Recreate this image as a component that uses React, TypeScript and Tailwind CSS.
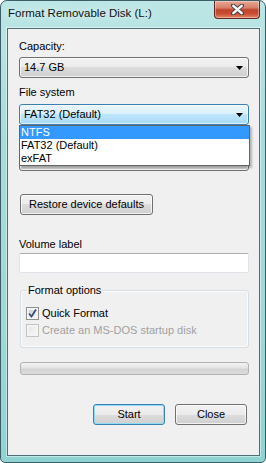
import React from "react"

const grayBtn =
    "bg-[linear-gradient(#f2f2f2,#ebebeb_50%,#dddddd_50%,#cfcfcf)] shadow-[inset_0_0_0_1px_rgba(255,255,255,0.7)]"

function Arrow() {
    return (
        <svg width="7" height="4" viewBox="0 0 7 4" className="absolute right-[5px] top-[8px]">
            <polygon points="0,0 7,0 3.5,4" fill="#000" />
        </svg>
    )
}

function Combo({ text, focused }: { text?: string; focused?: boolean }) {
    return (
        <div
            className={
                "relative h-[21px] w-[230px] rounded-[3px] border pl-[4px] leading-[19px] " +
                (focused
                    ? "border-[#3c7fb1] bg-[linear-gradient(#eaf6fd,#d9f0fc_50%,#bee6fd_50%,#a7d9f5)] shadow-[inset_0_0_0_1px_rgba(255,255,255,0.6)]"
                    : "border-[#707070] " + grayBtn)
            }
        >
            {text}
            <Arrow />
        </div>
    )
}

function Check({ checked, disabled }: { checked?: boolean; disabled?: boolean }) {
    return (
        <div
            className={
                "relative h-[13px] w-[13px] border p-[2px] " +
                (disabled ? "border-[#c4c4c4] bg-[#f4f4f4]" : "border-[#8e8f8f] bg-[#f4f4f4]")
            }
        >
            <div
                className={
                    "h-full w-full " +
                    (disabled
                        ? "bg-[linear-gradient(135deg,#e6e6e6,#f7f7f7)]"
                        : "bg-[linear-gradient(135deg,#c9cdd3,#f6f6f6)]")
                }
            />
            {checked && (
                <svg width="11" height="11" viewBox="0 0 11 11" className="absolute left-[0px] top-[0px]">
                    <path d="M2 5.5 L4.5 8.5 L9 1.5" fill="none" stroke="#3a4d7a" strokeWidth="1.8" />
                </svg>
            )}
        </div>
    )
}

export default function App() {
    return (
        <div className="relative flex h-[463px] w-[266px] flex-col rounded-t-[7px] rounded-b-[5px] border border-[#3d5e67] bg-[linear-gradient(#bde6e6,#a7dcdc_30%,#9fd8d8_70%,#90d3d3)] font-['Liberation_Sans',Arial,sans-serif] text-[11px] text-black">
            {/* title bar */}
            <div className="flex h-[27px] items-center pl-[7px] pb-[2px] text-[11.5px] text-[#111] [text-shadow:0_0_6px_#ffffff]">
                Format Removable Disk (L:)
            </div>
            <div className="absolute left-[213px] top-0 flex h-[18px] w-[46px] items-center justify-center rounded-b-[4px] border border-t-0 border-[#5b2a22] bg-[linear-gradient(#e7a796,#d7806b_40%,#c2432b_52%,#c84e33_75%,#e58666)] shadow-[inset_0_0_0_1px_rgba(255,255,255,0.35)]">
                <svg width="13" height="11" viewBox="0 0 13 11">
                    <path d="M2 1.5 L11 9.5 M11 1.5 L2 9.5" stroke="#444" strokeWidth="4.2" strokeLinecap="round" />
                    <path d="M2.3 1.8 L10.7 9.2 M10.7 1.8 L2.3 9.2" stroke="#fff" strokeWidth="2.4" strokeLinecap="round" />
                </svg>
            </div>

            {/* client area */}
            <div className="ml-[6px] flex h-[428px] w-[253px] flex-col border border-[#4f6d74] bg-[#f0f0f0] pl-[11px] pr-[10px] pt-[10px] shadow-[0_0_0_1px_rgba(255,255,255,0.45)]">
                <div className="h-[15px] leading-[15px]">Capacity:</div>
                <div className="mt-[3px]">
                    <Combo text="14.7 GB" />
                </div>

                <div className="mt-[7px] h-[15px] leading-[15px]">File system</div>
                <div className="relative z-10 mt-[4px]">
                    <Combo text="FAT32 (Default)" focused />
                    <div className="absolute left-0 top-full w-[231px] border border-[#646464] bg-white shadow-[2px_2px_2px_rgba(0,0,0,0.25)]">
                        <div className="h-[13px] bg-[#3399ff] pl-[1px] leading-[13px] text-white">NTFS</div>
                        <div className="h-[13px] pl-[1px] leading-[13px]">FAT32 (Default)</div>
                        <div className="h-[13px] pl-[1px] leading-[13px]">exFAT</div>
                    </div>
                </div>

                {/* allocation unit size row, covered by the open list */}
                <div className="mt-[6px] h-[15px]" />
                <div className="mt-[4px]">
                    <Combo />
                </div>

                <div
                    className={
                        "ml-[1px] mt-[23px] flex h-[21px] w-[133px] items-center justify-center rounded-[3px] border border-[#707070] " +
                        grayBtn
                    }
                >
                    Restore device defaults
                </div>

                <div className="mt-[22px] h-[15px] leading-[15px]">Volume label</div>
                <div className="mt-[1px] h-[20px] w-[230px] rounded-[2px] border border-[#e2e3ea] border-t-[#abadb3] bg-white" />

                {/* format options */}
                <div className="relative ml-[1px] mt-[17px] h-[58px] w-[229px] rounded-[3px] border border-[#d5dfe5] pl-[5px] pt-[14px] shadow-[inset_0_0_0_1px_rgba(255,255,255,0.8)]">
                    <div className="absolute left-[6px] top-[-8px] bg-[#f0f0f0] px-[1px] leading-[15px]">Format options</div>
                    <div className="flex h-[17px] items-center gap-[3px]">
                        <Check checked />
                        <span>Quick Format</span>
                    </div>
                    <div className="flex h-[17px] items-center gap-[3px] text-[#a0a0a0]">
                        <Check disabled />
                        <span>Create an MS-DOS startup disk</span>
                    </div>
                </div>

                <div className="ml-[1px] mt-[14px] h-[13px] w-[229px] rounded-[3px] border border-[#b2b2b2] bg-[linear-gradient(#f3f3f3,#e4e4e4_45%,#d3d3d3_55%,#dcdcdc)]" />

                <div className="mt-[29px] flex justify-end gap-[10px] pr-[2px]">
                    <div className="flex h-[21px] w-[72px] items-center justify-center rounded-[3px] border border-[#3c7fb1] bg-[linear-gradient(#f2f2f2,#ebebeb_50%,#dddddd_50%,#cfcfcf)] shadow-[inset_0_0_0_1px_#8fdcf8]">
                        Start
                    </div>
                    <div
                        className={
                            "flex h-[21px] w-[72px] items-center justify-center rounded-[3px] border border-[#707070] " +
                            grayBtn
                        }
                    >
                        Close
                    </div>
                </div>
            </div>
        </div>
    )
}
